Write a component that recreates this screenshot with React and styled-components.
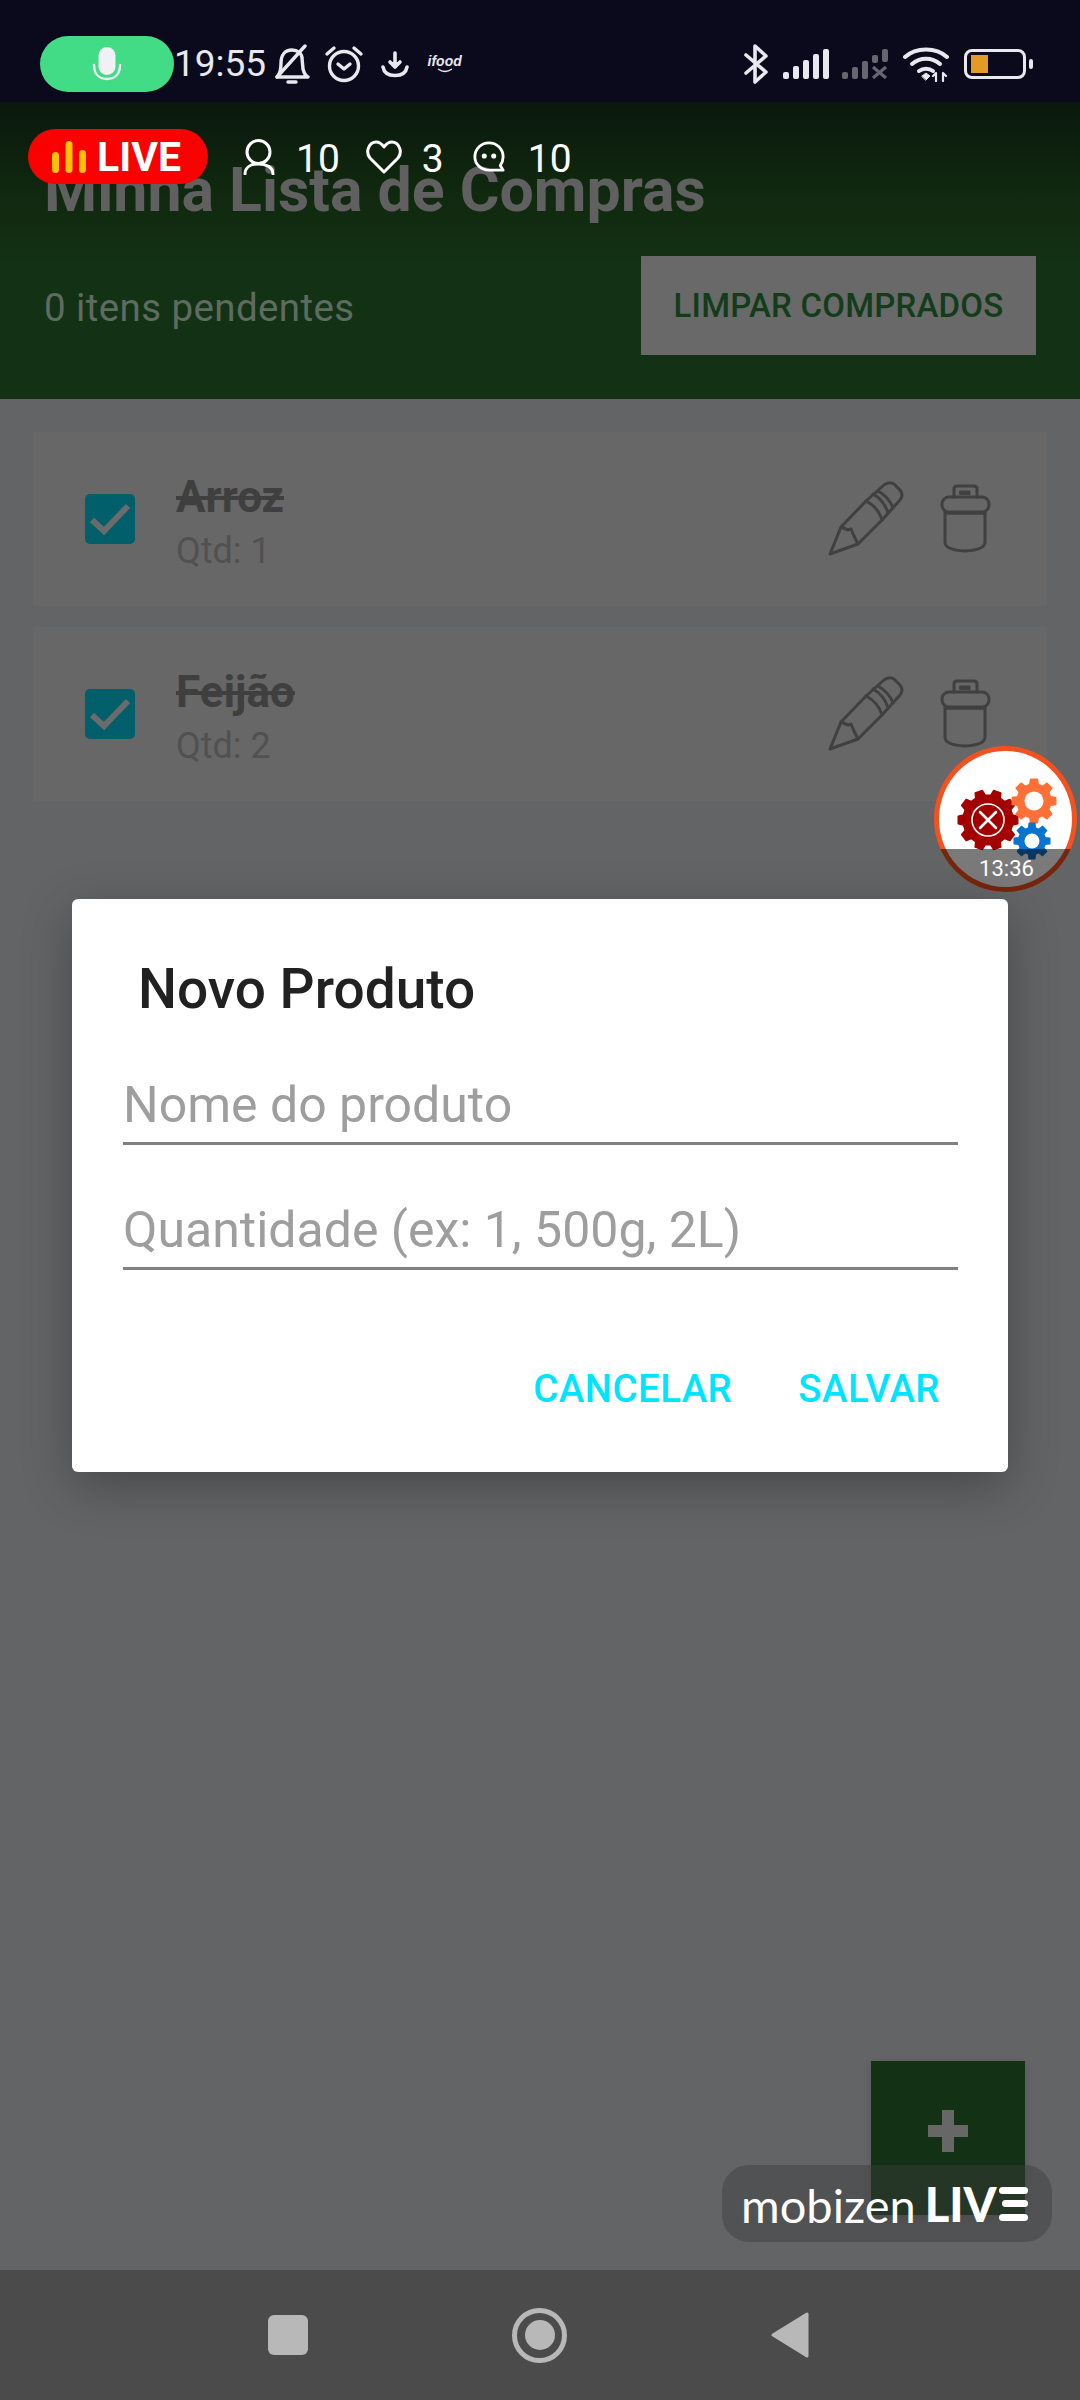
import React from "react";
import styled, { createGlobalStyle } from "styled-components";

const Global = createGlobalStyle`
  html, body { margin: 0; padding: 0; background: #636466; }
  * { box-sizing: border-box; }
`;

const Screen = styled.div`
  position: relative;
  width: 1080px;
  height: 2400px;
  overflow: hidden;
  display: flex;
  flex-direction: column;
  background: #636466;
  font-family: Roboto, "Liberation Sans", sans-serif;
`;

/* status bar */
const StatusBar = styled.div`
  height: 102px;
  flex: none;
  display: flex;
  align-items: center;
  padding: 26px 47px 0 40px;
  background: #0a0a1c;
  color: #e8e8ee;
`;
const MicPill = styled.div`
  width: 134px;
  height: 56px;
  border-radius: 28px;
  background: #42dc87;
  display: flex;
  align-items: center;
  justify-content: center;
`;
const Clock = styled.div`
  margin-left: 0;
  font-size: 37px;
  line-height: 42px;
  color: #e8e8ee;
`;
const Glyph = styled.svg`
  flex: none;
  display: block;
  margin-left: ${(p) => p.$gap || 0}px;
  fill: none;
  stroke: currentColor;
  stroke-linecap: round;
  stroke-linejoin: round;
`;
const IfoodMark = styled.div`
  margin-left: 19px;
  width: 33px;
  display: flex;
  flex-direction: column;
  align-items: center;
  font-family: "Liberation Sans", sans-serif;
  font-weight: 700;
  font-style: italic;
  font-size: 14px;
  line-height: 13px;
  color: #e8e8ee;
`;
const StatusRight = styled.div`
  margin-left: auto;
  display: flex;
  align-items: center;
`;
const Battery = styled.div`
  margin-left: 15px;
  display: flex;
  align-items: center;
`;
const BatteryBody = styled.div`
  width: 62px;
  height: 30px;
  border: 3px solid #e8e8ee;
  border-radius: 8px;
  padding: 3px 4px;
`;
const BatteryFill = styled.div`
  width: 17px;
  height: 18px;
  background: #e39b25;
`;
const BatteryCap = styled.div`
  margin-left: 3px;
  width: 4px;
  height: 10px;
  border-radius: 2px;
  background: #e8e8ee;
`;

/* live overlay */
const LiveOverlay = styled.div`
  position: absolute;
  left: 28px;
  top: 129px;
  display: flex;
  align-items: center;
  color: #fff;
`;
const LivePill = styled.div`
  width: 180px;
  height: 55px;
  border-radius: 28px;
  background: #fb0000;
  display: flex;
  align-items: center;
  padding-left: 24px;
  gap: 11px;
`;
const LiveText = styled.span`
  font-size: 41px;
  line-height: 40px;
  font-weight: 700;
  color: #fff;
`;
const StatCount = styled.span`
  margin-left: ${(p) => p.$gap}px;
  font-size: 39px;
  line-height: 44px;
  font-weight: 400;
  color: #fff;
  position: relative;
  top: 2px;
`;

/* header */
const Header = styled.header`
  flex: none;
  height: 297px;
  padding: 50px 44px 0 45px;
  background: linear-gradient(#0a180c 0, #10280f 30%, #133115 55%);
`;
const Title = styled.h1`
  margin: 0;
  font-size: 60.8px;
  line-height: 78px;
  font-weight: 700;
  color: #606060;
  position: relative;
  left: -1px;
`;
const HeaderRow = styled.div`
  margin-top: 26px;
  display: flex;
  align-items: center;
  justify-content: space-between;
`;
const Pending = styled.div`
  font-size: 38.5px;
  line-height: 46px;
  letter-spacing: 0.4px;
  color: #5e6b60;
  position: relative;
  top: 2px;
  left: -1px;
`;
const ClearButton = styled.div`
  width: 395px;
  height: 99px;
  background: #696969;
  color: #133c1a;
  display: flex;
  align-items: center;
  justify-content: center;
  font-size: 33px;
  font-weight: 500;
  letter-spacing: 0.2px;
`;

/* list */
const List = styled.main`
  flex: 1;
  padding: 33px 33px 0;
  display: flex;
  flex-direction: column;
  gap: 21px;
`;
const Card = styled.div`
  height: 174px;
  background: #676767;
  display: flex;
  align-items: center;
  padding: 0 53px 0 52px;
`;
const Checkbox = styled.div`
  width: 50px;
  height: 50px;
  flex: none;
  border-radius: 5px;
  background: #005f6b;
  display: flex;
  align-items: center;
  justify-content: center;
`;
const ItemText = styled.div`
  margin-left: 41px;
  padding-top: 7px;
  display: flex;
  flex-direction: column;
  gap: 5px;
`;
const ItemName = styled.div`
  font-size: 44px;
  line-height: 52px;
  font-weight: 700;
  color: #3f3f3f;
  text-decoration: line-through;
`;
const ItemQty = styled.div`
  font-size: 36px;
  line-height: 46px;
  color: #515151;
`;
const Actions = styled.div`
  margin-left: auto;
  display: flex;
  align-items: center;
  gap: 32px;
  color: #404040;
`;

/* FAB + watermark */
const Fab = styled.div`
  position: absolute;
  left: 871px;
  top: 2061px;
  width: 154px;
  height: 154px;
  background: #133115;
  display: flex;
  align-items: center;
  justify-content: center;
  box-shadow: 0 2px 8px rgba(0, 0, 0, 0.12);
`;
const Watermark = styled.div`
  position: absolute;
  left: 722px;
  top: 2165px;
  width: 330px;
  height: 77px;
  border-radius: 27px;
  background: rgba(60, 60, 60, 0.45);
  display: flex;
  align-items: center;
  padding-left: 19px;
  color: #fff;
  font-family: Lato, sans-serif;
`;
const BrandName = styled.span`
  font-size: 47px;
  line-height: 50px;
  font-weight: 400;
  position: relative;
  top: 1px;
`;
const BrandLive = styled.span`
  margin-left: 9px;
  font-size: 47px;
  line-height: 50px;
  font-weight: 900;
`;

/* floating timer widget */
const Widget = styled.div`
  position: absolute;
  left: 934px;
  top: 746px;
  width: 143px;
  height: 146px;
  border-radius: 50%;
  overflow: hidden;
  background: #f4511e;
  padding: 5px;
`;
const WidgetFace = styled.div`
  width: 100%;
  height: 100%;
  border-radius: 50%;
  background: #fff;
`;
const WidgetBand = styled.div`
  position: absolute;
  left: 0;
  right: 0;
  bottom: 0;
  height: 43px;
  background: rgba(0, 0, 0, 0.52);
  color: #fff;
  font-size: 22px;
  line-height: 24px;
  padding-top: 8px;
  padding-left: 2px;
  text-align: center;
`;

/* dialog */
const Dialog = styled.section`
  position: absolute;
  left: 72px;
  top: 899px;
  width: 936px;
  height: 573px;
  padding: 57px 50px 0 51px;
  background: #fff;
  border-radius: 6px;
  box-shadow: 0 14px 50px rgba(0, 0, 0, 0.28);
`;
const DialogTitle = styled.h2`
  margin: 0 0 53px 15px;
  font-size: 55px;
  line-height: 66px;
  font-weight: 500;
  color: #212121;
`;
const Field = styled.div`
  height: 70px;
  margin-bottom: 55px;
  border-bottom: 3px solid #808080;
  font-size: 50px;
  line-height: 60px;
  color: #9e9e9e;
`;
const DialogActions = styled.div`
  margin-top: 96px;
  margin-right: 18px;
  display: flex;
  justify-content: flex-end;
  gap: 66px;
`;
const DialogButton = styled.span`
  font-size: 38.5px;
  line-height: 46px;
  font-weight: 500;
  letter-spacing: 0.4px;
  color: #00e5ff;
`;

/* nav */
const NavBar = styled.nav`
  flex: none;
  height: 130px;
  padding-right: 3px;
  background: #4b4b4b;
  display: flex;
  align-items: center;
  justify-content: center;
  gap: 204px;
  color: #b8b8b8;
`;
const NavSquare = styled.div`
  width: 40px;
  height: 40px;
  border-radius: 6px;
  background: #b8b8b8;
`;
const NavHome = styled.div`
  width: 55px;
  height: 55px;
  border-radius: 50%;
  border: 5px solid #b8b8b8;
  display: flex;
  align-items: center;
  justify-content: center;
  &::after {
    content: "";
    width: 30px;
    height: 30px;
    border-radius: 50%;
    background: #b8b8b8;
  }
`;

function gearPath(cx, cy, teeth, outer, root) {
  const step = (Math.PI * 2) / teeth;
  const pts = [];
  for (let i = 0; i < teeth; i++) {
    const a = i * step;
    const t = step * 0.2;
    const b = step * 0.32;
    const pairs = [
      [a - b, root],
      [a - t, outer],
      [a + t, outer],
      [a + b, root],
    ];
    pairs.forEach(([ang, r]) =>
      pts.push(`${(cx + Math.cos(ang) * r).toFixed(2)} ${(cy + Math.sin(ang) * r).toFixed(2)}`)
    );
  }
  return `M${pts.join("L")}Z`;
}

const Gears = () => (
  <svg width="133" height="136" viewBox="0 0 133 136" style={{ display: "block" }}>
    <path d={gearPath(49, 69, 10, 30, 25)} fill="#a30000" stroke="#a30000" strokeWidth="1.5" strokeLinejoin="round" />
    <circle cx="49" cy="69" r="16" fill="none" stroke="#fff" strokeWidth="1.6" />
    <path d="M41 61 L57 77 M57 61 L41 77" stroke="#fff" strokeWidth="2.6" strokeLinecap="round" />
    <path d={gearPath(95, 50, 8, 22, 17)} fill="#ff7038" stroke="#ff7038" strokeWidth="1.5" strokeLinejoin="round" />
    <circle cx="95" cy="50" r="9.5" fill="#fff" />
    <path d={gearPath(93, 90, 8, 18, 13.5)} fill="#0a73d0" stroke="#0a73d0" strokeWidth="1.5" strokeLinejoin="round" />
    <circle cx="93" cy="90" r="7.5" fill="#fff" />
  </svg>
);

const Pencil = () => (
  <Glyph width="80" height="80" viewBox="0 0 80 80" strokeWidth="3">
    <path d="M4 75 L15 48 L40 22 L58 6 Q63 2 68 5 L74 11 Q78 16 74 21 L56 41 L32 65 Z" />
    <path d="M15 48 L22 51 L25 50 L28 57 L32 65" />
    <path d="M40 22 Q52 28 56 41 M47 15 Q58 21 62 34 M52 12 Q63 18 67 29" strokeWidth="3" />
  </Glyph>
);

const Trash = () => (
  <Glyph width="56" height="74" viewBox="0 0 56 74" strokeWidth="3">
    <rect x="4" y="15" width="47" height="15" rx="7" />
    <path d="M16 15 V7 Q16 4 19 4 H36 Q39 4 39 7 V15" />
    <rect x="22" y="9" width="10" height="3.5" fill="currentColor" strokeWidth="1" />
    <path d="M7 30 V60 Q7 68 27 69 Q47 68 47 60 V30" />
    <path d="M8 31 H47" strokeWidth="3.4" />
  </Glyph>
);

const Check = () => (
  <svg width="50" height="50" viewBox="0 0 50 50" style={{ display: "block" }}>
    <path d="M7 26 L19 37 L43 12" fill="none" stroke="#6b6b6b" strokeWidth="6" />
  </svg>
);

const items = [
  { name: "Arroz", qty: "Qtd: 1" },
  { name: "Feijão", qty: "Qtd: 2" },
];

export default function App() {
  return (
    <Screen>
      <Global />
      <StatusBar>
        <MicPill>
          <svg width="30" height="36" viewBox="0 0 30 36">
            <rect x="6.5" y="1" width="17" height="28" rx="8.5" fill="#f0f0f5" />
            <path d="M2 19 C2 29 8 33 15 33 C22 33 28 29 28 19" fill="none" stroke="#f0f0f5" strokeWidth="2.4" strokeLinecap="round" />
          </svg>
        </MicPill>
        <Clock>19:55</Clock>
        <Glyph $gap={8} width="36" height="40" viewBox="0 0 36 40" strokeWidth="3.4">
          <path d="M3 33 C6 30 7 26 7 19 C7 11 11 6 18 6 C24 6 28 10 28 14 L29 25 C30 29 32 32 34 33 Z" />
          <path d="M3 33 L31 2" />
          <path d="M14 38 H22" />
        </Glyph>
        <Glyph $gap={14} width="40" height="38" viewBox="0 0 40 38" strokeWidth="3.4">
          <circle cx="20" cy="21" r="14.5" />
          <path d="M14 19 L20 24 L26 19" />
          <path d="M3 9 L10 3 M37 9 L30 3" />
        </Glyph>
        <Glyph $gap={17} width="28" height="27" viewBox="0 0 28 27" strokeWidth="3.6">
          <path d="M14 2 V15" />
          <path d="M9 11 L14 16 L19 11" fill="currentColor" />
          <path d="M2 16 C3 22 8 24.5 14 24.5 C20 24.5 25 22 26 16" />
        </Glyph>
        <IfoodMark>
          ifood
          <svg width="18" height="6" viewBox="0 0 18 6">
            <path d="M2 1 Q9 6 16 1" fill="none" stroke="#e8e8ee" strokeWidth="1.4" />
          </svg>
        </IfoodMark>
        <StatusRight>
          <Glyph width="26" height="40" viewBox="0 0 26 40" strokeWidth="3.6">
            <path d="M3 11 L23 28 L12 38 V2 L23 12 L3 29" />
          </Glyph>
          <Glyph $gap={14} width="46" height="30" viewBox="0 0 46 30" stroke="none">
            <rect x="0" y="23" width="6" height="7" rx="2" fill="#e8e8ee" stroke="none" />
            <rect x="10" y="17" width="6" height="13" rx="2" fill="#e8e8ee" stroke="none" />
            <rect x="20" y="11" width="6" height="19" rx="2" fill="#e8e8ee" stroke="none" />
            <rect x="30" y="5" width="6" height="25" rx="2" fill="#e8e8ee" stroke="none" />
            <rect x="40" y="0" width="6" height="30" rx="2" fill="#e8e8ee" stroke="none" />
          </Glyph>
          <Glyph $gap={13} width="47" height="30" viewBox="0 0 47 30" strokeWidth="3.2" style={{ color: "#666670" }}>
            <rect x="0" y="23" width="6" height="7" rx="2" fill="currentColor" stroke="none" />
            <rect x="10" y="18" width="6" height="12" rx="2" fill="currentColor" stroke="none" />
            <rect x="20" y="12" width="6" height="18" rx="2" fill="currentColor" stroke="none" />
            <rect x="30" y="6" width="6" height="8" rx="2" fill="currentColor" stroke="none" />
            <rect x="40" y="0" width="6" height="13" rx="2" fill="currentColor" stroke="none" />
            <path d="M31 18 L44 29 M44 18 L31 29" strokeLinecap="butt" />
          </Glyph>
          <Glyph $gap={14} width="46" height="36" viewBox="0 0 46 36" strokeWidth="4">
            <path d="M2 11 C13 1 33 1 44 11" />
            <path d="M9 18 C17 11 29 11 37 18" />
            <path d="M16 25 C20 22 26 22 30 25" />
            <path d="M19 30 L23 27 L27 30 L23 34 Z" fill="currentColor" strokeWidth="1" />
            <path d="M33 35 V27 M30 30 L33 27 M40 27 V35 M40 27 L43 30" strokeWidth="2.2" />
          </Glyph>
          <Battery>
            <BatteryBody>
              <BatteryFill />
            </BatteryBody>
            <BatteryCap />
          </Battery>
        </StatusRight>
      </StatusBar>

      <Header>
        <Title>Minha Lista de Compras</Title>
        <HeaderRow>
          <Pending>0 itens pendentes</Pending>
          <ClearButton>LIMPAR COMPRADOS</ClearButton>
        </HeaderRow>
      </Header>

      <List>
        {items.map((it) => (
          <Card key={it.name}>
            <Checkbox>
              <Check />
            </Checkbox>
            <ItemText>
              <ItemName>{it.name}</ItemName>
              <ItemQty>{it.qty}</ItemQty>
            </ItemText>
            <Actions>
              <Pencil />
              <Trash />
            </Actions>
          </Card>
        ))}
      </List>

      <NavBar>
        <NavSquare />
        <NavHome />
        <svg width="38" height="46" viewBox="0 0 38 46" style={{ display: "block" }}>
          <path d="M36 2 V44 L2 23 Z" fill="#b8b8b8" stroke="#b8b8b8" strokeWidth="3" strokeLinejoin="round" />
        </svg>
      </NavBar>

      <LiveOverlay>
        <LivePill>
          <svg width="34" height="32" viewBox="0 0 34 32">
            <rect x="0" y="11" width="7" height="21" rx="3.5" fill="#ffc107" />
            <rect x="13.5" y="0" width="7" height="32" rx="3.5" fill="#ffc107" />
            <rect x="27" y="9" width="7" height="23" rx="3.5" fill="#ffc107" />
          </svg>
          <LiveText>LIVE</LiveText>
        </LivePill>
        <Glyph $gap={35} width="32" height="36" viewBox="0 0 32 36" strokeWidth="3">
          <circle cx="15.5" cy="13" r="11.5" />
          <path d="M2 35 C2 28 8 25 15.5 25 C23 25 30 28 30 35" />
        </Glyph>
        <StatCount $gap={21}>10</StatCount>
        <Glyph $gap={26} width="36" height="34" viewBox="0 0 36 34" strokeWidth="3">
          <path d="M18 32 L4 18 C-1 12 3 2 10 2 C14 2 16 4 18 7 C20 4 22 2 26 2 C33 2 37 12 32 18 Z" />
        </Glyph>
        <StatCount $gap={20}>3</StatCount>
        <Glyph $gap={29} width="32" height="34" viewBox="0 0 34 34" strokeWidth="3">
          <path d="M17 2 C9 2 2 8 2 17 C2 25 9 31 17 31 H32 L29 26 C31 23 32 20 32 17 C32 8 25 2 17 2 Z" />
          <circle cx="12" cy="16" r="1.2" fill="currentColor" />
          <circle cx="22" cy="16" r="1.2" fill="currentColor" />
        </Glyph>
        <StatCount $gap={23}>10</StatCount>
      </LiveOverlay>

      <Widget>
        <WidgetFace>
          <Gears />
        </WidgetFace>
        <WidgetBand>13:36</WidgetBand>
      </Widget>

      <Fab>
        <svg width="40" height="42" viewBox="0 0 40 42" style={{ position: "relative", top: "-7px" }}>
          <path d="M14 0 H26 V15 H40 V27 H26 V42 H14 V27 H0 V15 H14 Z" fill="#676767" />
        </svg>
      </Fab>

      <Watermark>
        <BrandName>mobizen</BrandName>
        <BrandLive>LIV</BrandLive>
        <svg width="30" height="36" viewBox="0 0 30 36" style={{ marginLeft: 2, display: "block" }}>
          <rect x="0" y="1" width="29" height="7" rx="3.5" fill="#fff" />
          <rect x="3" y="14" width="26" height="7" rx="3.5" fill="#fff" />
          <rect x="0" y="28" width="29" height="7" rx="3.5" fill="#fff" />
        </svg>
      </Watermark>

      <Dialog>
        <DialogTitle>Novo Produto</DialogTitle>
        <Field>Nome do produto</Field>
        <Field>Quantidade (ex: 1, 500g, 2L)</Field>
        <DialogActions>
          <DialogButton>CANCELAR</DialogButton>
          <DialogButton>SALVAR</DialogButton>
        </DialogActions>
      </Dialog>
    </Screen>
  );
}
